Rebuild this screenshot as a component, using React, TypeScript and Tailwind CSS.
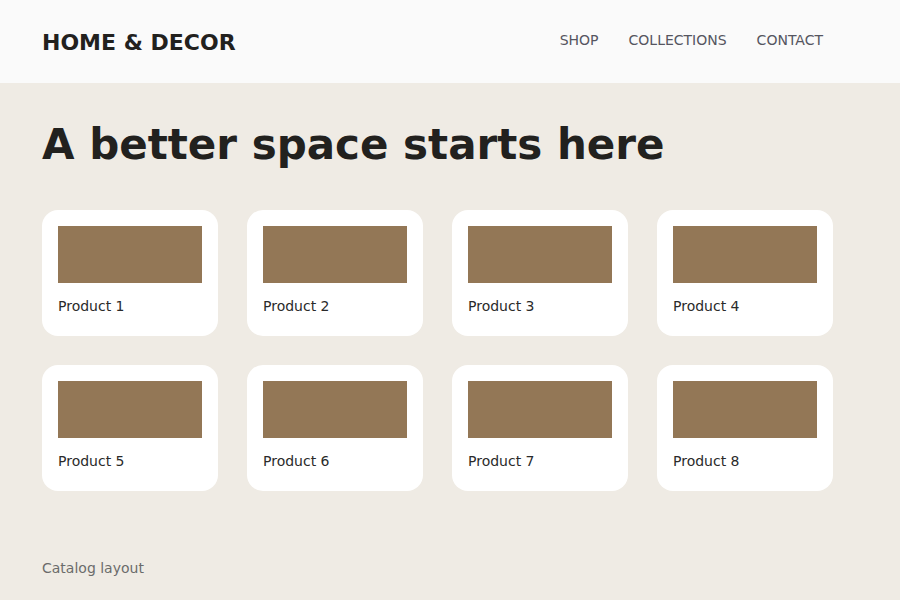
export default function App() {
  const products = [1, 2, 3, 4, 5, 6, 7, 8];
  return (
    <div className="w-[900px] h-[600px] bg-[#efebe4] flex flex-col" style={{ fontFamily: '"DejaVu Sans", sans-serif' }}>
      <header className="h-[83px] bg-[#fafafa] flex items-center justify-between pl-[42px] pr-[77px]">
        <div className="text-[22px] font-bold text-[#22211e] leading-none mt-[2px]">HOME &amp; DECOR</div>
        <nav className="flex gap-[30px] text-[14px] text-[#555560] -mt-[2px]">
          <span>SHOP</span>
          <span>COLLECTIONS</span>
          <span>CONTACT</span>
        </nav>
      </header>
      <main className="px-[42px] pt-[37px] flex-1 flex flex-col">
        <h1 className="text-[42px] font-bold text-[#22211e] leading-[49px]">A better space starts here</h1>
        <div className="grid grid-cols-[176px_176px_176px_176px] gap-[29px] mt-[41px]">
          {products.map((n) => (
            <div key={n} className="bg-white rounded-[16px] h-[126px] p-4">
              <div className="h-[57px] bg-[#937756]" />
              <div className="mt-[13px] text-[14px] leading-[20px] text-[#2a2a2a]">Product {n}</div>
            </div>
          ))}
        </div>
        <div className="mt-auto pb-[24px] text-[14px] leading-[16px] text-[#6b6b6b]">Catalog layout</div>
      </main>
    </div>
  );
}
